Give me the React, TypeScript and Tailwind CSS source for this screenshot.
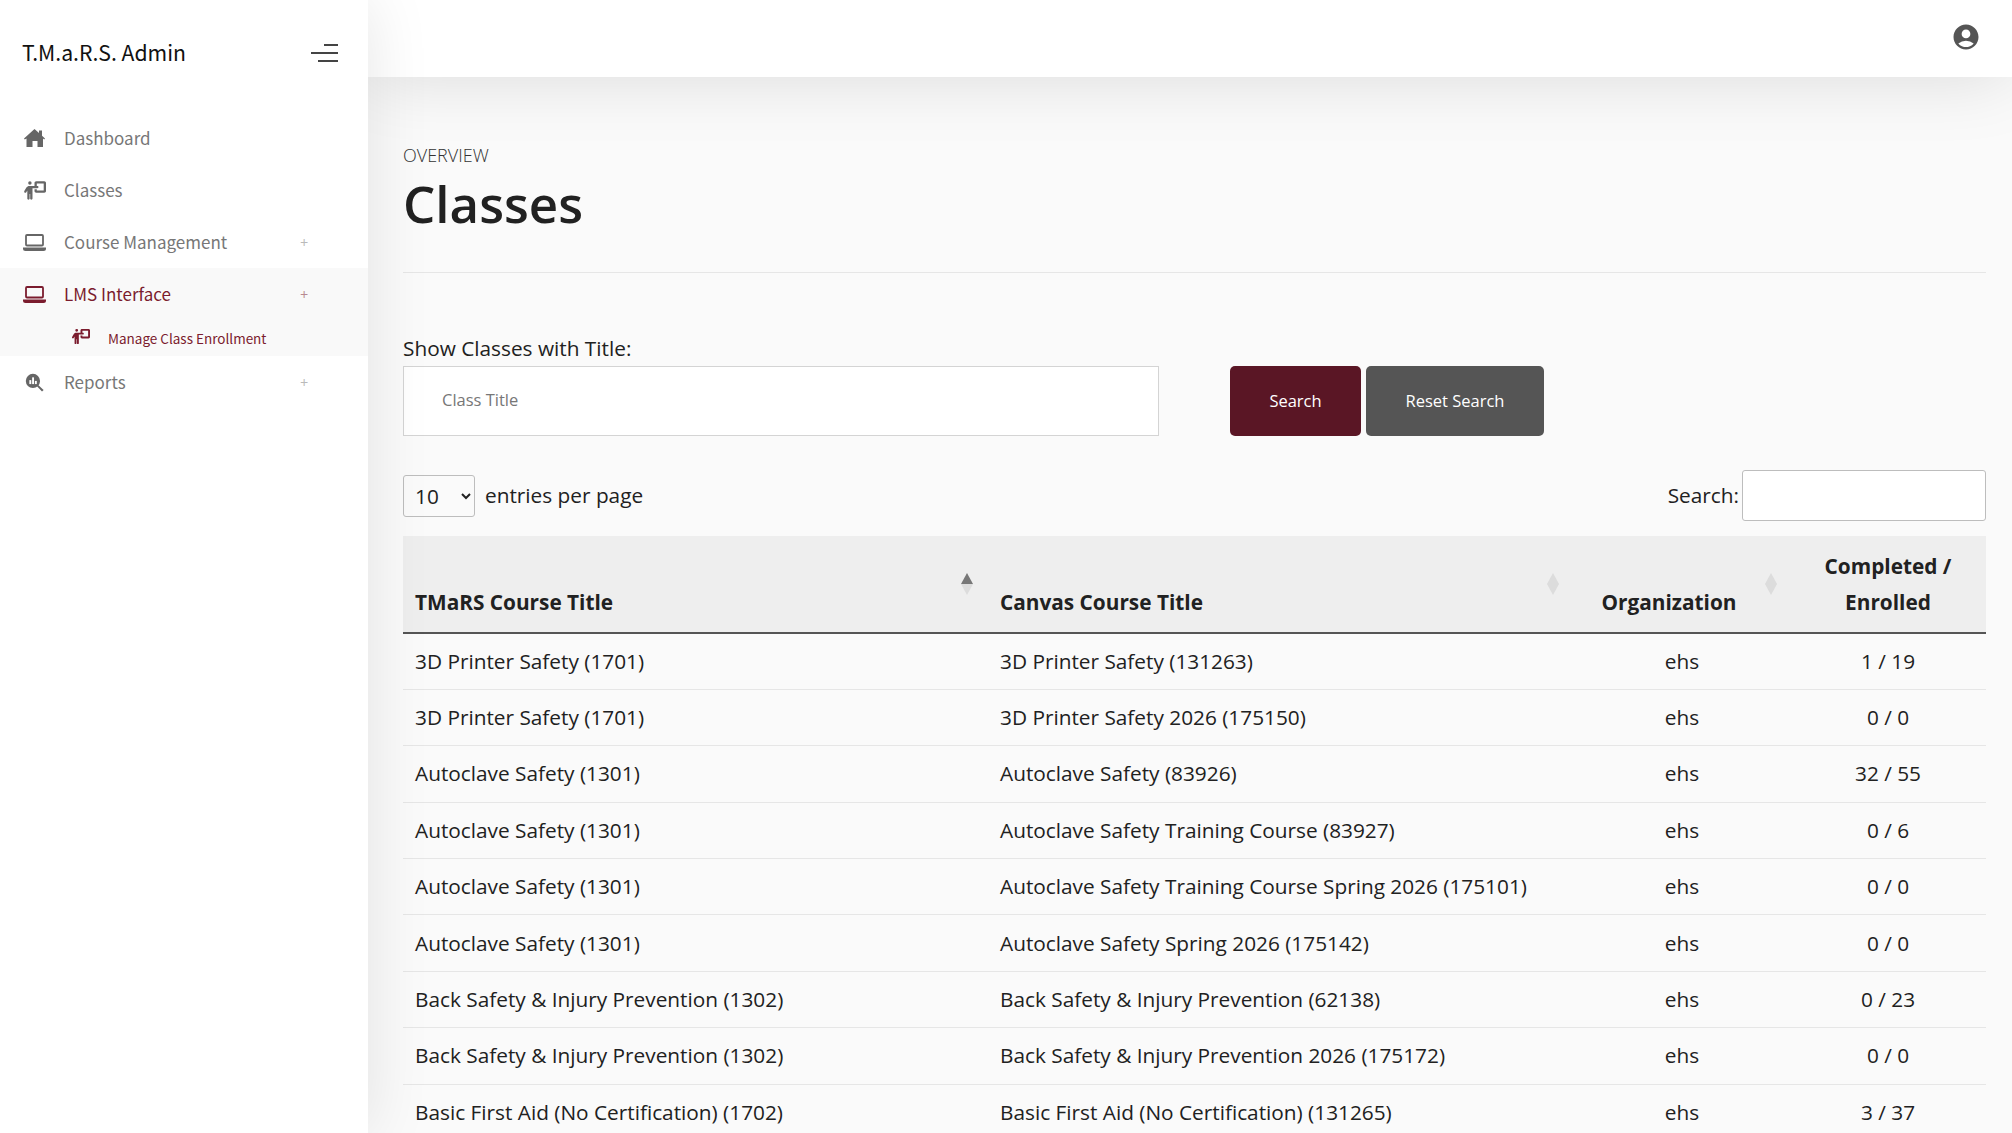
import { FaPersonChalkboard } from "react-icons/fa6";
import { MdAccountCircle } from "react-icons/md";

const rows = [
  ["3D Printer Safety (1701)", "3D Printer Safety (131263)", "ehs", "1 / 19"],
  ["3D Printer Safety (1701)", "3D Printer Safety 2026 (175150)", "ehs", "0 / 0"],
  ["Autoclave Safety (1301)", "Autoclave Safety (83926)", "ehs", "32 / 55"],
  ["Autoclave Safety (1301)", "Autoclave Safety Training Course (83927)", "ehs", "0 / 6"],
  ["Autoclave Safety (1301)", "Autoclave Safety Training Course Spring 2026 (175101)", "ehs", "0 / 0"],
  ["Autoclave Safety (1301)", "Autoclave Safety Spring 2026 (175142)", "ehs", "0 / 0"],
  ["Back Safety & Injury Prevention (1302)", "Back Safety & Injury Prevention (62138)", "ehs", "0 / 23"],
  ["Back Safety & Injury Prevention (1302)", "Back Safety & Injury Prevention 2026 (175172)", "ehs", "0 / 0"],
  ["Basic First Aid (No Certification) (1702)", "Basic First Aid (No Certification) (131265)", "ehs", "3 / 37"],
];

function Plus() {
  return <span className="ml-auto mr-[60px] text-[14px] leading-none opacity-50">+</span>;
}

function HomeIcon() {
  return (
    <svg viewBox="0 0 21 18" className="h-[18px] w-[21px]" fill="currentColor">
      <path d="M10.5 0 15 4V1.5h3v5.2l3 2.8-.8 1-1.2-.9V18h-5.5v-6h-5v6H2.5V9.6l-1.7.9-.8-1z" />
    </svg>
  );
}

function LaptopIcon() {
  return (
    <svg viewBox="0 0 23 17" className="h-[17px] w-[23px]" fill="currentColor">
      <rect x="3" y="1" width="17" height="10.5" rx="1" fill="none" stroke="currentColor" strokeWidth="1.8" />
      <path d="M0 13.5h23v1a2.5 2.5 0 0 1-2.5 2.5h-18A2.5 2.5 0 0 1 0 14.5z" />
    </svg>
  );
}

function ReportsIcon() {
  return (
    <svg viewBox="0 0 24 24" className="ml-[2px] h-[19px] w-[19px]" fill="currentColor">
      <circle cx="10" cy="10" r="9" />
      <rect x="5.5" y="9" width="2.4" height="5" fill="#fff" />
      <rect x="9" y="5.5" width="2.4" height="8.5" fill="#fff" />
      <rect x="12.5" y="10" width="2.4" height="4" fill="#fff" />
      <path d="M16 14.5 23.5 21.5 21.5 23.5 14.5 16z" />
    </svg>
  );
}

function SortArrows({ active, right = "right-[15px]" }: { active?: boolean; right?: string }) {
  return (
    <span className={`absolute top-[37px] flex flex-col ${right}`}>
      <span className={`h-0 w-0 border-x-[6px] border-b-[11px] border-x-transparent ${active ? "border-b-[#777777]" : "border-b-[#dcdcdc]"}`} />
      <span className="h-0 w-0 border-x-[6px] border-t-[11px] border-x-transparent border-t-[#dcdcdc]" />
    </span>
  );
}

export default function App() {
  return (
    <div className="flex h-screen overflow-hidden bg-[#fafafa] font-['Open_Sans',sans-serif] text-[#212121]">
      <aside className="relative z-10 w-[368px] shrink-0 bg-white font-['Noto_Sans_CJK_JP',sans-serif] shadow-[0_0_60px_rgba(0,0,0,0.1)]">
        <div className="flex h-[105px] items-center justify-between pl-[22px] pr-[30px]">
          <span className="pb-[1px] text-[21.2px] text-[#111111]">T.M.a.R.S. Admin</span>
          <svg width="28" height="20" viewBox="0 0 28 20" stroke="#444444" strokeWidth="2">
            <path d="M14 2h14M1 10h27M8 18h20" />
          </svg>
        </div>
        <nav className="mt-[7px] text-[17px] text-[#777777]">
          <a className="flex h-[52px] items-center">
            <span className="flex w-[64px] pl-[24px] text-[#666666]"><HomeIcon /></span>
            Dashboard
          </a>
          <a className="flex h-[52px] items-center">
            <span className="flex w-[64px] pl-[23px] text-[#666666]"><FaPersonChalkboard size={23} /></span>
            Classes
          </a>
          <a className="flex h-[52px] items-center">
            <span className="flex w-[64px] pl-[23px] text-[#666666]"><LaptopIcon /></span>
            Course Management
            <Plus />
          </a>
          <div className="bg-[#f9f9f9] text-[#7b1c2e]">
            <a className="flex h-[52px] items-center">
              <span className="flex w-[64px] pl-[23px]"><LaptopIcon /></span>
              LMS Interface
              <Plus />
            </a>
            <a className="flex h-[36px] items-center pl-[71px] text-[13.5px]">
              <span className="mr-[18px] flex pb-[4px]"><FaPersonChalkboard size={19} /></span>
              Manage Class Enrollment
            </a>
          </div>
          <a className="flex h-[52px] items-center">
            <span className="flex w-[64px] pl-[23px] text-[#666666]"><ReportsIcon /></span>
            Reports
            <Plus />
          </a>
        </nav>
      </aside>

      <div className="flex min-w-0 flex-1 flex-col">
        <header className="relative flex h-[77px] shrink-0 items-start justify-end bg-white pr-[31px] pt-[22px] shadow-[0_0_70px_rgba(0,0,0,0.13)]">
          <MdAccountCircle size={30} className="text-[#555555]" />
        </header>

        <main className="pl-[35px] pr-[26px] pt-[64px]">
          <div className="text-[18px] font-light leading-[28px] text-[#333333]">OVERVIEW</div>
          <h1 className="mt-[3px] text-[51px] font-semibold leading-[62px] text-[#212121]">Classes</h1>
          <hr className="mt-[38px] border-t border-[#e6e6e6]" />

          <label className="mt-[60px] block text-[20.8px] leading-[30px]">Show Classes with Title:</label>
          <div className="mt-[3px] flex items-stretch">
            <input
              placeholder="Class Title"
              className="h-[70px] w-[756px] border border-[#d4d4d4] bg-white pb-[4px] pl-[38px] text-[16.5px] placeholder:text-[#777777]"
            />
            <button className="ml-[71px] h-[70px] w-[131px] rounded-[5px] bg-[#5a1625] text-[16.5px] font-medium text-white">Search</button>
            <button className="ml-[5px] h-[70px] w-[178px] rounded-[5px] bg-[#555555] text-[16.5px] font-medium text-white">Reset Search</button>
          </div>

          <div className="mt-[34px] flex h-[51px] items-center">
            <select className="h-[42px] w-[72px] rounded-[3px] border border-[#bdbdbd] bg-[#fafafa] pl-[7px] text-[20.8px]">
              <option>10</option>
            </select>
            <span className="ml-[10px] text-[20.8px]">entries per page</span>
            <span className="ml-auto mr-[3px] text-[20.8px]">Search:</span>
            <input className="h-[51px] w-[244px] rounded-[3px] border border-[#bdbdbd] bg-white" />
          </div>

          <table className="mt-[15px] w-full table-fixed border-collapse text-[20.8px]">
            <colgroup>
              <col className="w-[585px]" />
              <col className="w-[586px]" />
              <col className="w-[216px]" />
              <col />
            </colgroup>
            <thead>
              <tr className="border-b-2 border-[#555555] bg-[#eeeeee]">
                <th className="relative h-[97px] px-[12px] pb-[12px] text-left align-bottom font-bold leading-[36px]">
                  TMaRS Course Title
                  <SortArrows active />
                </th>
                <th className="relative px-[12px] pb-[12px] text-left align-bottom font-bold leading-[36px]">
                  Canvas Course Title
                  <SortArrows />
                </th>
                <th className="relative pb-[12px] pr-[26px] text-center align-bottom font-bold leading-[36px]">
                  Organization
                  <SortArrows right="right-[13px]" />
                </th>
                <th className="pb-[12px] text-center align-bottom font-bold leading-[36px]">
                  Completed /<br />Enrolled
                </th>
              </tr>
            </thead>
            <tbody>
              {rows.map((row, index) => (
                <tr key={index} className="h-[56.4px] border-b border-[#e6e6e6]">
                  <td className="px-[12px]">{row[0]}</td>
                  <td className="px-[12px]">{row[1]}</td>
                  <td className="text-center">{row[2]}</td>
                  <td className="text-center">{row[3]}</td>
                </tr>
              ))}
            </tbody>
          </table>
        </main>
      </div>
    </div>
  );
}
